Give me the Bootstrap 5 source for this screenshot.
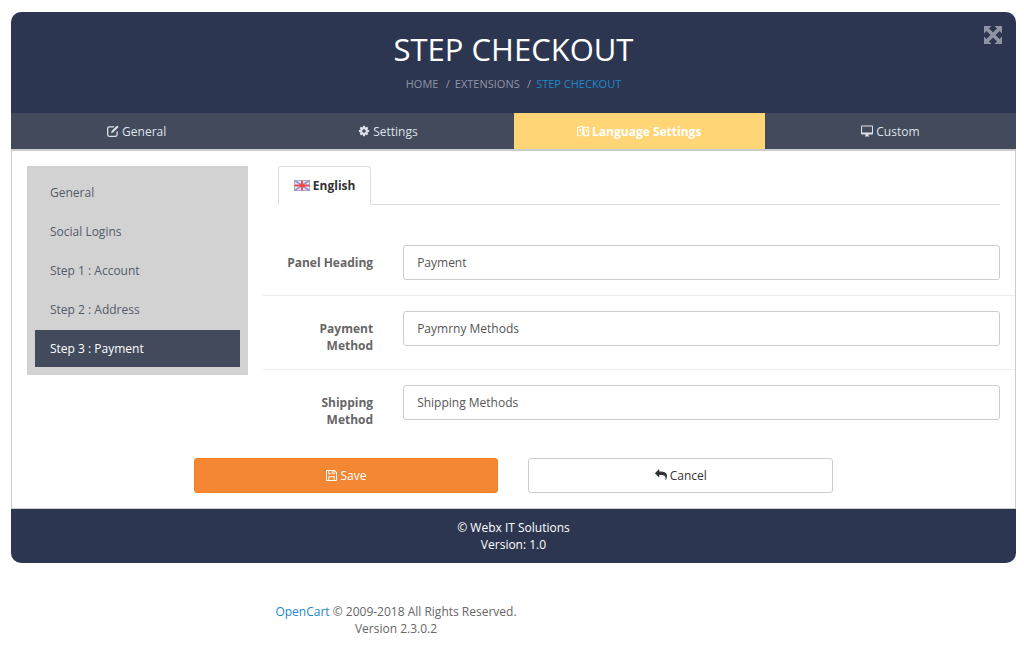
<!DOCTYPE html>
<html lang="en">
<head>
  <meta charset="UTF-8" />
  <meta name="viewport" content="width=device-width, initial-scale=1" />
  <title>Step Checkout</title>
  <link href="https://cdn.jsdelivr.net/npm/bootstrap@5.3.0/dist/css/bootstrap.min.css" rel="stylesheet" />
  <style>
    body {
      background: #fff;
      font-family: "Open Sans", "Liberation Sans", sans-serif;
      font-size: 12px;
      line-height: 17px;
      color: #666;
      padding-top: 12px;
    }

    svg.ico { height: 12px; width: 12px; fill: currentColor; vertical-align: -1px; }

    .wrap-box { margin: 0 8px 0 11px; }

    .top-head {
      background: #2d3651;
      border-radius: 10px 10px 0 0;
      height: 101px;
      padding-top: 17px;
    }
    .top-head h1 { color: #fff; font-size: 31px; line-height: 40px; font-weight: 400; margin: 0 0 6px; }
    .top-head .crumbs { color: #8d95a5; font-size: 11px; text-transform: uppercase; }
    .top-head .crumbs span { margin: 0 5px 0 4.5px; }
    .top-head .crumbs b { color: #1e88c9; font-weight: 400; }
    .expand-btn { position: absolute; top: 14px; right: 14px; color: #8e94a3; line-height: 0; }
    .expand-btn svg { width: 18px; height: 18px; fill: currentColor; stroke: currentColor; }

    .main-tabs { background: #424a5c; }
    .main-tabs .nav-link {
      color: #dfe2e8;
      font-size: 12px;
      line-height: 17px;
      padding: 10px 0 9px;
      border-radius: 0;
    }
    .main-tabs .nav-link.active { background: #ffd576; color: #fff; font-weight: 700; }

    .main-body {
      border: 1px solid #ccc;
      border-top-width: 2px;
      padding: 15px 0;
    }
    .main-body .row { --bs-gutter-x: 30px; margin-left: 0; margin-right: 0; }
    .main-body .row .row { margin-left: -15px; margin-right: -15px; }

    .side-menu { background: #d2d2d2; padding: 8px 8px 6px; }
    .side-menu .nav-link { color: #555b68; padding: 10px 15px; margin-bottom: 2px; }
    .side-menu .nav-link.active { background: #424a5c; color: #fff; }

    .lang-tabs { border-bottom-color: #ddd; margin-bottom: 25px; }
    .lang-tabs .nav-link {
      color: #333;
      font-weight: 700;
      padding: 10px 15px;
      border-radius: 3px 3px 0 0;
    }
    .lang-tabs .nav-link.active { border-color: #ddd #ddd #fff; color: #333; }
    .lang-tabs svg { width: 16px; height: 11px; vertical-align: -1px; }

    .form-line { border-top: 1px solid #ededed; padding: 15px 0; }
    .form-line.first-line { border-top: 0; }
    .form-line label { font-weight: 700; text-align: right; padding-top: 9px; color: #666; }
    .form-line .form-control {
      font-size: 12px;
      line-height: 17px;
      color: #555;
      height: 35px;
      padding: 8px 13px;
      border-color: #ccc;
      border-radius: 3px;
    }

    .btn-line { margin-top: 15px; }
    .act-btn { width: 100%; font-size: 12px; line-height: 17px; padding: 8px 13px; border-radius: 3px; }
    .act-save { background: #f38733; border-color: #f77e1c; color: #fff; }
    .act-save svg.ico { width: 11px; height: 11px; }
    .act-cancel { background: #fff; border-color: #ccc; color: #333; }

    .bottom-bar {
      background: #2d3651;
      border-radius: 0 0 10px 10px;
      color: #fff;
      padding: 10px;
    }

    .page-foot { width: 792px; margin-top: 40px; }
    .page-foot a { color: #1e88c9; text-decoration: none; }
  </style>
</head>
<body>
  <div class="wrap-box">
    <!-- cabecera -->
    <div class="top-head text-center position-relative">
      <h1>STEP CHECKOUT</h1>
      <div class="crumbs">Home <span>/</span>Extensions <span>/</span><b>Step Checkout</b></div>
      <a class="expand-btn" href="#" aria-label="Expand">
        <svg viewBox="0 0 18 18"><path stroke="none" d="M0 0h7.500L0 7.500zM18 0v7.500L10.500 0zM18 18h-7.500L18 10.500zM0 18v-7.500L7.500 18z"/><path fill="none" stroke-width="3.600" d="M3 3l12 12M15 3L3 15"/></svg>
      </a>
    </div>

    <ul class="nav nav-justified main-tabs">
      <li class="nav-item"><a class="nav-link" href="#">
        <svg class="ico" viewBox="0 0 14 14"><path d="M2.500 1.500H9L7.600 3H2.500A1 1 0 0 0 1.500 4v7.500a1 1 0 0 0 1 1H10a1 1 0 0 0 1-1V8.200l1.500-1.500v4.800A2.500 2.500 0 0 1 10 14H2.500A2.500 2.500 0 0 1 0 11.500V4a2.500 2.500 0 0 1 2.500-2.500zM11.800.6l1.700 1.700L7.200 8.700 4.800 9.300l.6-2.400z"/></svg>
        General</a></li>
      <li class="nav-item"><a class="nav-link" href="#">
        <svg class="ico" viewBox="0 0 1792 1792"><path d="M1152 896q0-106-75-181t-181-75-181 75-75 181 75 181 181 75 181-75 75-181zm512-109v222q0 12-8 23t-20 13l-185 28q-19 54-39 91 35 50 107 138 10 12 10 25t-9 23q-27 37-99 108t-94 71q-12 0-26-9l-138-108q-44 23-91 38-16 136-29 186-7 28-36 28h-222q-14 0-24.500-8.500t-11.500-21.500l-28-184q-49-16-90-37l-141 107q-10 9-25 9-14 0-25-11-126-114-165-168-7-10-7-23 0-12 8-23 15-21 51-66.500t54-70.500q-27-50-41-99l-183-27q-13-2-21-12.500t-8-23.500v-222q0-12 8-23t19-13l186-28q14-46 39-92-40-57-107-138-10-12-10-24 0-10 9-23 26-36 98.500-107.500t94.500-71.500q13 0 26 10l138 107q44-23 91-38 16-136 29-186 7-28 36-28h222q14 0 24.500 8.500t11.500 21.500l28 184q49 16 90 37l142-107q9-9 24-9 13 0 25 10 129 119 165 170 7 8 7 22 0 12-8 23-15 21-51 66.500t-54 70.500q26 50 41 98l183 28q13 2 21 12.500t8 23.500z"/></svg>
        Settings</a></li>
      <li class="nav-item"><a class="nav-link active" href="#">
        <svg class="ico" viewBox="0 0 14 14"><path fill-rule="evenodd" d="M0 2.500 6 .5l1 1.500 7 0v11l-6 0-1-1.500-7 2zM1.300 3.400v8.900l4.700-1.500V1.900zM8.300 3.300l.9 8.500 3.500 0V3.300z"/><path d="M2.300 5h2.900v1H4.400l-.2 2.800-1-.1.2-2.700H2.300zM9.500 5.500h2.500v1l-.5 2.500-1-.2.400-2.300H9.500z"/></svg>
        Language Settings</a></li>
      <li class="nav-item"><a class="nav-link" href="#">
        <svg class="ico" viewBox="0 0 14 13"><path fill-rule="evenodd" d="M1 0h12a1 1 0 0 1 1 1v8.500a1 1 0 0 1-1 1H8.500l.5 1.500.5.300V13h-5v-.7l.5-.3.500-1.500H1a1 1 0 0 1-1-1V1a1 1 0 0 1 1-1zM1.200 1.200V8.300h11.600V1.200z"/></svg>
        Custom</a></li>
    </ul>

    <div class="main-body">
      <div class="row">
        <div class="col-3">
          <div class="side-menu">
            <div class="nav flex-column">
              <a class="nav-link" href="#">General</a>
              <a class="nav-link" href="#">Social Logins</a>
              <a class="nav-link" href="#">Step 1 : Account</a>
              <a class="nav-link" href="#">Step 2 : Address</a>
              <a class="nav-link active" href="#">Step 3 : Payment</a>
            </div>
          </div>
        </div>
        <div class="col-9">
          <ul class="nav nav-tabs lang-tabs">
            <li class="nav-item"><a class="nav-link active" href="#">
              <svg viewBox="0 0 16 11"><rect width="16" height="11" fill="#f7e3e8"/><path d="M0 0l16 11M16 0L0 11" stroke="#8f95d6" stroke-width="1.800"/><path d="M8 0v11M0 5.500h16" stroke="#ee4a4f" stroke-width="1.800"/><path d="M5 5.500l3-3 3 3-3 3z" fill="#ee4a4f"/><rect x=".4" y=".4" width="15.200" height="10.200" fill="none" stroke="#9c9cc6" stroke-width=".8"/></svg>
              English</a></li>
          </ul>

          <div class="row form-line first-line">
            <label class="col-2" for="f1">Panel Heading</label>
            <div class="col-10"><input id="f1" class="form-control" type="text" value="Payment" /></div>
          </div>
          <div class="row form-line">
            <label class="col-2" for="f2">Payment Method</label>
            <div class="col-10"><input id="f2" class="form-control" type="text" value="Paymrny Methods" /></div>
          </div>
          <div class="row form-line">
            <label class="col-2" for="f3">Shipping Method</label>
            <div class="col-10"><input id="f3" class="form-control" type="text" value="Shipping Methods" /></div>
          </div>
        </div>
      </div>
      <div class="row btn-line">
        <div class="col-4 offset-2">
          <button class="btn act-btn act-save" type="button">
            <svg class="ico" viewBox="0 0 14 14"><path fill-rule="evenodd" d="M1 0h10l3 3v10a1 1 0 0 1-1 1H1a1 1 0 0 1-1-1V1a1 1 0 0 1 1-1zM1.200 1.200v11.600H3V8h8v4.800h1.800V3.500L10.800 1.500V5.500H3V1.200zM4.200 9.200v3.600h5.600V9.200zM4.200 1.200v3.100h5.400V1.200zM7.500 1.700h1.300v2.100H7.500z"/></svg>
            Save</button>
        </div>
        <div class="col-4">
          <button class="btn act-btn act-cancel" type="button">
            <svg class="ico" viewBox="0 0 1792 1792"><path d="M1792 1120q0 166-127 451-3 7-10.500 24t-13.500 30-13 22q-12 17-28 17-15 0-23.500-10t-8.500-25q0-9 2.500-26.500t2.500-23.500q5-68 5-123 0-101-17.500-181t-48.500-138.500-80-101-105.500-69.500-133-42.500-154-21.500-175.500-6h-224v256q0 26-19 45t-45 19-45-19l-512-512q-19-19-19-45t19-45l512-512q19-19 45-19t45 19 19 45v256h224q713 0 875 403 53 134 53 333z"/></svg>
            Cancel</button>
        </div>
      </div>
    </div>

    <div class="bottom-bar text-center">
      © Webx IT Solutions<br />Version: 1.0
    </div>
  </div>

  <div class="page-foot text-center">
    <a href="#">OpenCart</a> © 2009-2018 All Rights Reserved.<br />Version 2.3.0.2
  </div>

  <script src="https://cdn.jsdelivr.net/npm/bootstrap@5.3.0/dist/js/bootstrap.bundle.min.js"></script>
</body>
</html>
